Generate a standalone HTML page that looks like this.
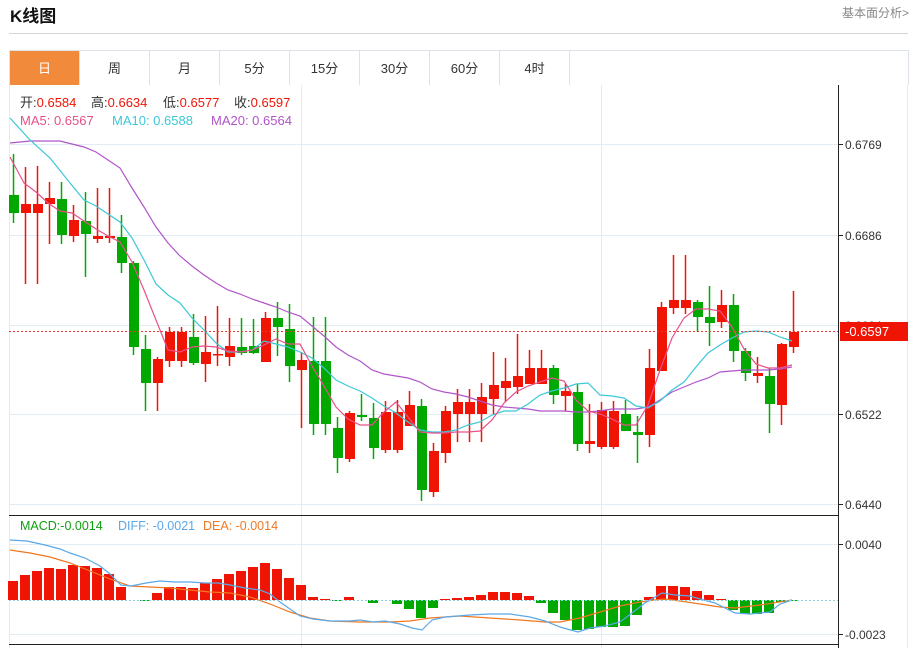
<!DOCTYPE html>
<html><head><meta charset="utf-8"><style>
body{margin:0;width:917px;height:648px;background:#fff;font-family:"Liberation Sans","Noto Sans CJK SC",sans-serif;position:relative;overflow:hidden}
.t{position:absolute;left:10px;top:2px;font-size:17px;font-weight:bold;color:#111}
.r{position:absolute;right:8px;top:4px;font-size:12px;color:#888}
.hl{position:absolute;left:9px;top:33px;width:899px;height:1px;background:#d4d4d4}
.tabs{position:absolute;left:9px;top:50px;width:898px;height:34px;border:1px solid #dde3e8;border-bottom:none;display:flex}
.tabs div{width:69px;border-right:1px solid #dde3e8;text-align:center;line-height:35px;font-size:13px;color:#333}
.tabs div.a{background:#f28a3c;color:#fff}
svg{position:absolute;left:0;top:0}
</style></head><body>
<div class="t">K线图</div><div class="r">基本面分析&gt;</div><div class="hl"></div>
<div class="tabs"><div class="a">日</div><div>周</div><div>月</div><div>5分</div><div>15分</div><div>30分</div><div>60分</div><div>4时</div></div>
<svg id="s" width="917" height="648" font-family="Liberation Sans, Noto Sans CJK SC, sans-serif">
<g stroke="#e2ecf3" stroke-width="1">
<line x1="9" y1="144.5" x2="838" y2="144.5"/><line x1="9" y1="235.5" x2="838" y2="235.5"/><line x1="9" y1="325.5" x2="838" y2="325.5"/><line x1="9" y1="414.5" x2="838" y2="414.5"/><line x1="9" y1="504.5" x2="838" y2="504.5"/>
<line x1="9" y1="544.5" x2="838" y2="544.5"/><line x1="9" y1="634.5" x2="838" y2="634.5"/>
<line x1="301.5" y1="85" x2="301.5" y2="648"/><line x1="601.5" y1="85" x2="601.5" y2="648"/>
<line x1="9.5" y1="85" x2="9.5" y2="648"/><line x1="907.5" y1="85" x2="907.5" y2="648"/>
</g>
<g id="c"></g>
<line x1="9" y1="331.5" x2="838" y2="331.5" stroke="#e83a30" stroke-dasharray="2,2"/>
<line x1="9" y1="600.5" x2="838" y2="600.5" stroke="#8fd0e8" stroke-dasharray="2,2"/>
<line x1="9" y1="515.5" x2="838" y2="515.5" stroke="#222"/>
<line x1="9" y1="644.5" x2="838" y2="644.5" stroke="#222"/>
<line x1="838.5" y1="85" x2="838.5" y2="648" stroke="#222"/>
<g stroke="#222"><line x1="838" y1="144.5" x2="843" y2="144.5"/><line x1="838" y1="235.5" x2="843" y2="235.5"/><line x1="838" y1="414.5" x2="843" y2="414.5"/><line x1="838" y1="504.5" x2="843" y2="504.5"/><line x1="838" y1="544.5" x2="843" y2="544.5"/><line x1="838" y1="634.5" x2="843" y2="634.5"/></g>
<g font-size="12" fill="#333">
<text x="845" y="149">0.6769</text><text x="845" y="240">0.6686</text><text x="845" y="330">0.6604</text><text x="845" y="419">0.6522</text><text x="845" y="509">0.6440</text>
<text x="845" y="549">0.0040</text><text x="845" y="639">-0.0023</text></g>
<rect x="840" y="322" width="68" height="19" fill="#f01405"/>
<text x="845" y="336" font-size="13" fill="#fff">-0.6597</text>
<g font-size="13">
<text x="20" y="107" fill="#333">开:<tspan fill="#f01405">0.6584</tspan></text>
<text x="91" y="107" fill="#333">高:<tspan fill="#f01405">0.6634</tspan></text>
<text x="163" y="107" fill="#333">低:<tspan fill="#f01405">0.6577</tspan></text>
<text x="234" y="107" fill="#333">收:<tspan fill="#f01405">0.6597</tspan></text>
<text x="20" y="125" fill="#e8508a">MA5: 0.6567</text>
<text x="112" y="125" fill="#3cc8d8">MA10: 0.6588</text>
<text x="211" y="125" fill="#b055c8">MA20: 0.6564</text>
<text x="20" y="530" fill="#10a010" font-size="12.5">MACD:-0.0014</text>
<text x="118" y="530" fill="#5aa8e8" font-size="12.5">DIFF: -0.0021</text>
<text x="203" y="530" fill="#f07820" font-size="12.5">DEA: -0.0014</text>
</g>
</svg>
<script>
var C=[[195,213,154,223,0],[213,204,167,284,1],[213,204,166,284,1],[204,198,182,244,1],[199,235,182,244,0],[236,220,205,242,1],[221,234,192,277,0],[239,236,188,243,1],[238,236,188,243,1],[237,263,215,273,0],[263,347,261,355,0],[349,383,335,411,0],[383,359,357,411,1],[361,332,327,367,1],[361,332,327,367,1],[337,363,314,365,0],[364,352,316,382,1],[355,354,306,366,1],[357,346,318,366,1],[347,353,318,355,0],[346,353,319,354,0],[362,318,312,362,1],[318,327,302,356,0],[329,366,304,382,0],[370,360,352,428,1],[361,424,317,435,0],[361,424,317,435,0],[428,458,417,473,0],[459,413,411,462,1],[415,417,394,421,0],[418,448,403,459,0],[450,412,401,453,1],[450,412,400,453,1],[426,405,391,426,1],[406,490,399,501,0],[492,451,443,497,1],[453,411,406,463,1],[414,402,389,442,1],[414,402,389,442,1],[414,397,383,442,1],[399,385,352,414,1],[388,381,358,402,1],[387,376,334,394,1],[384,368,350,384,1],[384,368,350,384,1],[368,395,365,404,0],[396,391,384,411,1],[392,444,384,451,0],[444,441,404,453,1],[447,410,402,449,1],[447,411,401,449,1],[414,431,400,431,0],[432,435,416,463,0],[435,368,349,447,1],[371,307,302,371,1],[308,300,255,314,1],[308,300,255,314,1],[302,317,300,332,0],[317,323,286,346,0],[322,305,290,328,1],[305,351,294,362,0],[351,373,348,381,0],[376,373,357,383,1],[376,404,368,433,0],[405,344,343,425,1],[347,332,291,353,1]];
var H=[581,575,571,568,569,565,566,568,574,587,600,601,593,587,587,588,583,579,574,571,567,563,569,578,585,597,599,601,597,600,603,600,604,609,618,608,599,598,597,595,592,592,593,596,603,613,620,630,629,627,627,626,615,597,586,586,587,591,595,599,610,614,614,613,602,601];
var R='#f01405',G='#00a800',s='';
H.forEach(function(t,i){var x=13+12*i;if(t==600)return;var y=Math.min(t,600),h=Math.abs(t-600);s+='<rect x="'+(x-5)+'" y="'+y+'" width="10" height="'+h+'" fill="'+(t<600?R:G)+'"/>';});
C.forEach(function(c,i){var x=13+12*i,col=c[4]?R:G,t=Math.min(c[0],c[1]),h=Math.max(1.5,Math.abs(c[0]-c[1]));s+='<line x1="'+(x+.5)+'" y1="'+c[2]+'" x2="'+(x+.5)+'" y2="'+c[3]+'" stroke="'+col+'" stroke-width="1.5"/><rect x="'+(x-4)+'" y="'+t+'" width="10" height="'+h+'" fill="'+col+'"/>';});
function pl(p,c){return '<polyline fill="none" stroke="'+c+'" stroke-width="1.2" points="'+p+'"/>';}
var ma5="10,157 24,183 36,192 48,203 60,211 72,213 84,221 96,229 108,236 120,242 132,262 144,290 156,320 168,350 180,352 192,347 204,346 216,347 228,351 240,352 252,350 264,345 276,339 288,344 300,344 312,366 324,386 336,407 348,419 360,425 372,425 384,412 396,402 408,417 420,432 432,433 444,433 456,432 468,432 480,431 492,420 504,403 516,392 528,386 540,382 552,378 564,381 576,400 588,411 600,414 612,419 624,425 636,425 648,405 660,370 672,338 684,318 696,309 708,309 720,311 732,327 744,349 756,364 768,368 780,368 792,365";
var ma10="10,118 30,140 50,158 70,183 84,200 96,206 108,214 120,222 132,238 144,260 156,284 168,295 180,303 192,318 204,330 216,343 228,352 240,352 252,350 264,341 276,344 288,347 300,352 312,358 324,368 336,380 348,386 360,391 372,398 384,406 396,413 408,422 420,430 432,432 444,432 456,430 468,425 480,422 492,415 504,411 516,411 528,404 540,395 552,391 564,388 576,384 588,383 600,395 612,396 624,398 636,406 648,408 660,401 672,390 684,382 696,367 708,353 720,345 732,338 744,332 756,331 768,332 780,337 792,341";
var ma20="10,143 30,141 60,141 84,147 96,152 108,160 120,168 132,188 144,207 156,227 168,243 180,256 192,266 204,275 216,283 228,290 240,294 252,299 264,303 276,307 288,312 300,316 312,326 324,336 336,347 348,355 360,361 372,370 384,374 396,376 408,378 420,382 432,389 444,392 456,394 468,397 480,401 492,405 504,407 516,408 528,409 540,411 552,411 564,411 576,412 588,412 600,411 612,409 624,409 636,409 648,407 660,400 672,392 684,387 696,382 708,378 720,372 732,371 744,370 756,370 768,370 780,369 792,367";
var dif="10,540 27,541 45,545 60,549 70,553 85,558 100,566 110,574 121,585 131,586 146,583 160,581 175,582 190,582 205,583 218,583 230,585 245,588 260,590 270,594 280,602 290,609 300,616 313,619 330,621 350,621 360,620 373,622 385,621 400,624 412,628 422,630 432,620 445,617 470,615 490,614 510,614 530,617 545,621 560,627 578,632 590,628 605,626 620,622 632,613 645,603 662,593 675,595 690,596 700,599 715,603 735,613 750,614 770,612 780,604 792,600";
var dea="10,550 30,553 50,557 70,563 90,571 110,579 130,586 150,587 170,588 190,590 210,592 230,593 250,597 270,604 290,612 310,618 330,621 360,622 390,622 410,621 430,618 460,616 490,618 520,620 545,622 560,622 580,618 600,612 620,606 640,602 655,600 665,599 680,601 700,604 720,607 735,608 760,605 792,600";
s+=pl(ma20,'#b055c8')+pl(ma10,'#3cc8d8')+pl(ma5,'#e8508a')+pl(dea,'#f07820')+pl(dif,'#5aa8e8');
document.getElementById('c').innerHTML=s;
</script>
</body></html>
